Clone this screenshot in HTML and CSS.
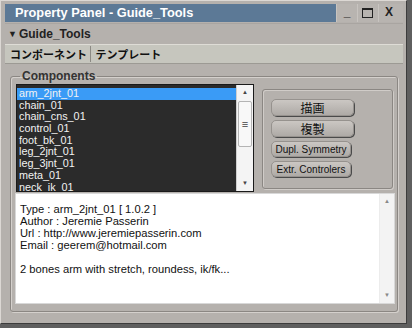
FILE: index.html
```html
<html>
    <head>
        <title>Property Panel - Guide_Tools</title>
        <link rel="stylesheet" href="styles.css">
    </head>
    <body>
        <div class="window">
            <div class="titlebar">
                <div class="caption">Property Panel - Guide_Tools</div>
                <div class="ctrls">
                    <span class="ctrl min">_</span>
                    <span class="ctrl max"></span>
                    <span class="ctrl close">X</span>
                </div>
            </div>
            <div class="head"><span class="arrow">&#9660;</span>Guide_Tools</div>
            <div class="tabs">
                <span class="tab on">コンポーネント</span>
                <span class="tab">テンプレート</span>
            </div>

            <fieldset class="group">
                <legend>Components</legend>
                <div class="top">
                    <div class="list">
                        <ul class="items">
                            <li class="sel">arm_2jnt_01</li>
                            <li>chain_01</li>
                            <li>chain_cns_01</li>
                            <li>control_01</li>
                            <li>foot_bk_01</li>
                            <li>leg_2jnt_01</li>
                            <li>leg_3jnt_01</li>
                            <li>meta_01</li>
                            <li>neck_ik_01</li>
                        </ul>
                        <div class="vscroll">
                            <div class="btn-up">&#9650;</div>
                            <div class="track"><div class="thumb">&#8801;</div></div>
                            <div class="btn-down">&#9660;</div>
                        </div>
                    </div>
                    <div class="actions">
                        <button class="act jp">描画</button>
                        <button class="act jp">複製</button>
                        <button class="act sm">Dupl. Symmetry</button>
                        <button class="act sm">Extr. Controlers</button>
                    </div>
                </div>
                <div class="info">
                    <div class="infotext">
                        Type : arm_2jnt_01 [ 1.0.2 ]<br>
                        Author : Jeremie Passerin<br>
                        Url : http://www.jeremiepasserin.com<br>
                        Email : geerem@hotmail.com<br>
                        <br>
                        2 bones arm with stretch, roundess, ik/fk...
                    </div>
                    <div class="vscroll light">
                        <div class="btn-up">&#9650;</div>
                        <div class="track"></div>
                        <div class="btn-down">&#9660;</div>
                    </div>
                </div>
            </fieldset>
        </div>
    </body>
</html>
```
FILE: styles.css
```css
*{
    margin: 0;
    padding: 0;
    box-sizing: border-box;
}
body{
    width: 412px;
    height: 328px;
    background: #5f5f5f;
    font-family: "Liberation Sans", Arial, "Noto Sans CJK JP", sans-serif;
    overflow: hidden;
}

.window{
    width: 407px;
    height: 324px;
    background: #b5b1ad;
    border: 1px solid;
    border-color: #dcd8d4 #3c3c3c #3c3c3c #dcd8d4;
    padding: 3px 3px 2px 4px;
}

/* barre de titre */
.titlebar{
    display: flex;
    height: 18px;
}
.caption{
    flex: 1;
    background: #5c7996;
    color: #fff;
    font-weight: bold;
    font-size: 12.8px;
    line-height: 18px;
    padding-left: 10px;
}
.ctrls{
    width: 67px;
    display: flex;
    background: #b8b4b0;
    padding-right: 4px;
}
.ctrl{
    flex: 1;
    text-align: center;
    font-size: 12px;
    font-weight: bold;
    color: #222;
    line-height: 16px;
    border-left: 1px solid #c8c4c0;
}
.max{
    position: relative;
}
.max:after{
    content: "";
    position: absolute;
    left: 4px;
    top: 4px;
    width: 9px;
    height: 7px;
    border: 1px solid #222;
    border-top-width: 2px;
}

.head{
    height: 21px;
    margin-top: 1px;
    border-top: 1px solid #a9a5a1;
    font-size: 12px;
    font-weight: bold;
    color: #222;
    line-height: 20px;
    padding-left: 3px;
}
.arrow{
    font-size: 9px;
    margin-right: 2px;
    vertical-align: 1px;
}

.tabs{
    height: 20px;
    background: #c6c6be;
    border-top: 1px solid #dedcd6;
    border-bottom: 1px solid #9c9a94;
    font-family: "Noto Sans CJK JP", sans-serif;
    font-size: 11px;
    font-weight: bold;
    color: #111;
    line-height: 18px;
    padding-left: 5px;
}
.tab{
    padding-right: 3px;
}
.tab.on{
    border-right: 1px solid #8c8a84;
    margin-right: 2px;
}

/* groupe Components */
.group{
    margin: 5px 5px 0 5px;
    border: 1px solid #8b8783;
    border-radius: 3px;
    box-shadow: inset 1px 1px 0 #d4d0cc, 1px 1px 0 #d4d0cc;
    padding: 1px 2px 7px 4px;
}
.group legend{
    margin-left: 5px;
    padding: 0 2px;
    font-size: 12px;
    font-weight: bold;
    color: #333;
    line-height: 14px;
}

.top{
    display: flex;
    align-items: flex-start;
}
.list{
    display: flex;
    width: 238px;
    height: 108px;
    margin-left: 1px;
    background: #2b2b2b;
    border: 1px solid #1a1a1a;
    overflow: hidden;
}
.items{
    flex: 1;
    list-style: none;
    padding-top: 3px;
    font-size: 10.8px;
    line-height: 11.7px;
    color: #f2f2f2;
}
.items li{
    padding-left: 2px;
    height: 11.7px;
}
.items li.sel{
    background: #3a9bf6;
}

.vscroll{
    width: 17px;
    display: flex;
    flex-direction: column;
    background: #f4f4f4;
    border-left: 1px solid #cfcfcf;
    font-size: 6px;
    color: #444;
    text-align: center;
}
.btn-up, .btn-down{
    height: 15px;
    line-height: 15px;
}
.track{
    flex: 1;
    padding: 0 1px;
}
.thumb{
    height: 46px;
    margin-top: 1px;
    background: #f8f8f8;
    border: 1px solid #b4b4b4;
    border-radius: 2px;
    font-size: 11px;
    line-height: 44px;
}

.actions{
    width: 131px;
    height: 100px;
    margin: 5px 0 0 8px;
    border: 1px solid #8b8783;
    border-radius: 3px;
    box-shadow: inset 1px 1px 0 #d0ccc8, 1px 1px 0 #d0ccc8;
    padding: 9px 0 0 8px;
    display: flex;
    flex-direction: column;
    gap: 4px;
}
.act{
    height: 16px;
    border: 1px solid #96928e;
    border-radius: 5px;
    background: linear-gradient(#cbc7c3, #aeaaa6);
    box-shadow: 1px 1px 0 #4a4a4a;
    color: #111;
    text-align: center;
}
.act.jp{
    width: 83px;
    height: 17px;
    font-family: "Noto Sans CJK JP", sans-serif;
    font-size: 12px;
    line-height: 14px;
}
.act.sm{
    width: 80px;
    font-family: "Liberation Sans", sans-serif;
    font-size: 10px;
    line-height: 13px;
}

.info{
    display: flex;
    width: 380px;
    height: 111px;
    margin-top: 1px;
    background: #fff;
    border: 1px solid #d8d8d8;
}
.infotext{
    flex: 1;
    padding: 9px 0 0 4px;
    font-size: 11.2px;
    line-height: 12px;
    color: #111;
}
.vscroll.light{
    width: 15px;
    background: #f3f3f3;
    border-left: 1px solid #ececec;
    color: #888;
}
```
